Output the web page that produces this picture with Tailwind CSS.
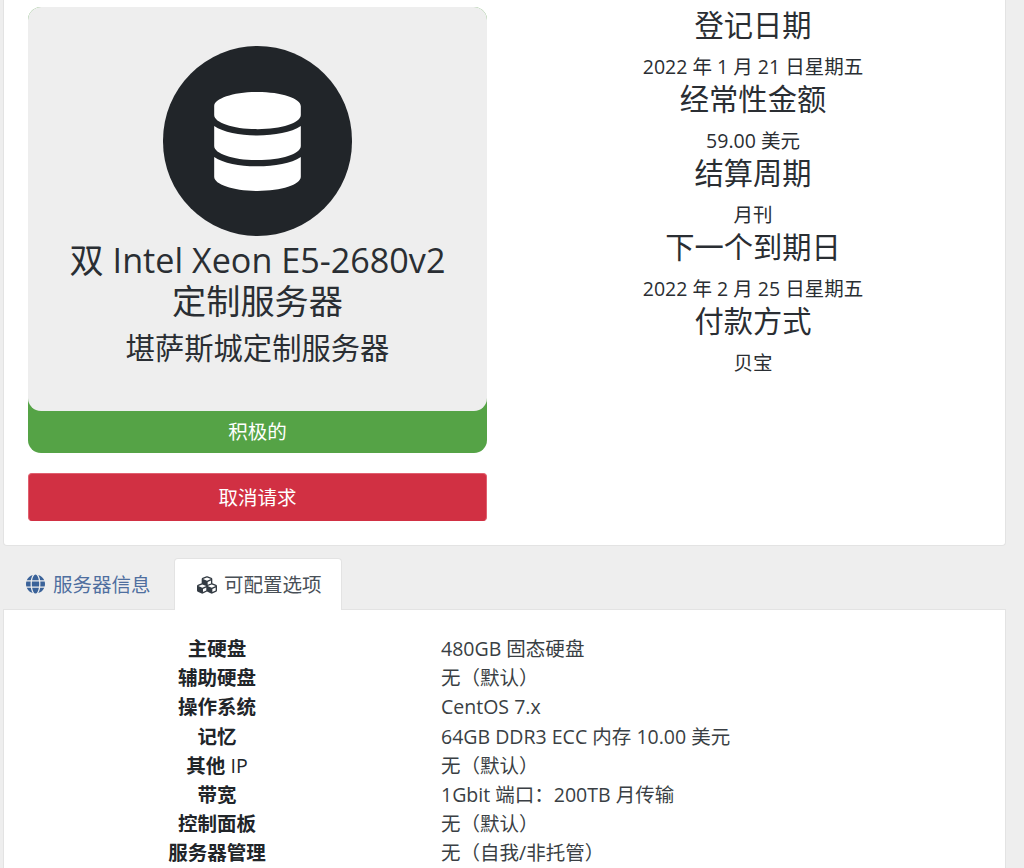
<!DOCTYPE html>
<html lang="zh">
<head>
<meta charset="utf-8">
<script src="https://cdn.jsdelivr.net/npm/@tailwindcss/browser@4"></script>
<title>Server details</title>
</head>
<body class="m-0 bg-[#eeeeee] font-['Open_Sans','Noto_Sans_CJK_SC',sans-serif] text-[19.52px] leading-[29px] text-[#212529]">
<div class="h-[868px] overflow-hidden px-[3px]">
  <section class="w-[1003px] h-[546px] bg-white border border-t-0 border-[#e3e3e3] rounded-b-[4px] flex pt-[7px]">
    <div class="ml-[24px] w-[459px] shrink-0">
      <div class="h-[446px] rounded-[13px] bg-[#55a346] text-white flex flex-col">
        <div class="h-[404px] shrink-0 bg-[#eeeeee] rounded-[13px] text-[#2a2e33] text-center pt-[39px]">
          <div class="mx-auto w-[189px] h-[190px] rounded-full bg-[#212529] flex items-center justify-center">
            <svg class="w-[87px] h-[99px] fill-white" viewBox="0 0 448 512"><path d="M448 73.143v45.714C448 159.143 347.667 192 224 192S0 159.143 0 118.857V73.143C0 32.857 100.333 0 224 0s224 32.857 224 73.143zM448 176v102.857C448 319.143 347.667 352 224 352S0 319.143 0 278.857V176c48.125 33.143 136.208 48.572 224 48.572S399.874 209.143 448 176zm0 160v102.857C448 479.143 347.667 512 224 512S0 479.143 0 438.857V336c48.125 33.143 136.208 48.572 224 48.572S399.874 369.143 448 336z"/></svg>
          </div>
          <h3 class="mt-[3px] text-[34.16px] leading-[41px] font-normal">双 Intel Xeon E5-2680v2<br>定制服务器</h3>
          <h4 class="mt-[10px] text-[29.28px] leading-[35px] font-normal">堪萨斯城定制服务器</h4>
        </div>
        <div class="flex-1 flex items-center justify-center pb-px">积极的</div>
      </div>
      <button class="mt-[20px] block w-full h-[48px] rounded-[4px] bg-[#d13043] border border-[#e0606f] border-b-[#d13043] text-white text-center">取消请求</button>
    </div>
    <div class="ml-[19px] w-[494px] pt-px text-center text-[#2a2e33]">
      <h4 class="text-[29.28px] leading-[35px] mb-[9px]">登记日期</h4>
      <p class="leading-[30px]">2022 年 1 月 21 日星期五</p>
      <h4 class="text-[29.28px] leading-[35px] mb-[9px]">经常性金额</h4>
      <p class="leading-[30px]">59.00 美元</p>
      <h4 class="text-[29.28px] leading-[35px] mb-[9px]">结算周期</h4>
      <p class="leading-[30px]">月刊</p>
      <h4 class="text-[29.28px] leading-[35px] mb-[9px]">下一个到期日</h4>
      <p class="leading-[30px]">2022 年 2 月 25 日星期五</p>
      <h4 class="text-[29.28px] leading-[35px] mb-[9px]">付款方式</h4>
      <p class="leading-[30px]">贝宝</p>
    </div>
  </section>
  <nav class="mt-[12px] h-[52px] flex pl-px">
    <a class="h-[52px] w-[170px] pl-[22px] flex items-center gap-[8px] text-[#4f6f9f]">
      <svg class="w-[19px] h-[20px] fill-[#3a6299]" viewBox="0 0 496 512"><path d="M336.5 160C322 70.7 287.8 8 248 8s-74 62.7-88.5 152h177zM152 256c0 22.2 1.2 43.5 3.3 64h185.3c2.1-20.5 3.3-41.8 3.3-64s-1.2-43.5-3.3-64H155.3c-2.1 20.5-3.3 41.8-3.3 64zm324.7-96c-28.6-67.9-86.5-120.4-158-141.6 24.4 33.8 41.2 84.7 50 141.6h108zM177.2 18.4C105.8 39.6 47.8 92.1 19.3 160h108c8.7-56.9 25.5-107.8 49.9-141.6zM487.4 192H372.7c2.1 21 3.3 42.5 3.3 64s-1.2 43-3.3 64h114.6c5.5-20.5 8.6-41.8 8.6-64s-3.1-43.5-8.5-64zM120 256c0-21.5 1.2-43 3.3-64H8.6C3.2 212.5 0 233.8 0 256s3.2 43.5 8.6 64h114.6c-2-21-3.2-42.5-3.2-64zm39.5 96c14.5 89.3 48.7 152 88.5 152s74-62.7 88.5-152h-177zm159.3 141.6c71.4-21.2 129.4-73.7 158-141.6h-108c-8.8 56.9-25.6 107.8-50 141.6zM19.3 352c28.6 67.9 86.5 120.4 158 141.6-24.4-33.8-41.2-84.7-50-141.6h-108z"/></svg>
      服务器信息
    </a>
    <a class="relative z-10 h-[52px] w-[168px] pl-[22px] flex items-center gap-[7px] bg-white border border-b-0 border-[#e3e3e3] rounded-t-[4px] text-[#495057]">
      <svg class="w-[20px] h-[20px] fill-[#333b43]" viewBox="0 0 512 512"><path d="M488.6 250.2L392 214V105.5c0-15-9.3-28.4-23.4-33.7l-100-37.5c-8.1-3.1-17.1-3.1-25.3 0l-100 37.5c-14.1 5.3-23.4 18.7-23.4 33.7V214l-96.6 36.2C9.3 255.5 0 268.9 0 283.9V394c0 13.6 7.7 26.1 19.9 32.2l100 50c10.1 5.1 22.1 5.1 32.2 0l103.9-52 103.9 52c10.1 5.1 22.1 5.1 32.2 0l100-50c12.2-6.1 19.9-18.6 19.9-32.2V283.9c0-15-9.3-28.4-23.4-33.7zM358 214.8l-85 31.9v-68.2l85-37v73.3zM154 104.1l102-38.2 102 38.2v.6l-102 41.4-102-41.4v-.6zm84 291.1l-85 42.5v-79.1l85-38.8v75.4zm0-112l-102 41.4-102-41.4v-.6l102-38.2 102 38.2v.6zm240 112l-85 42.5v-79.1l85-38.8v75.4zm0-112l-102 41.4-102-41.4v-.6l102-38.2 102 38.2v.6z"/></svg>
      可配置选项
    </a>
  </nav>
  <section class="-mt-px w-[1003px] h-[300px] bg-white border border-[#e3e3e3] pt-[24px] grid grid-cols-[426px_1fr] auto-rows-[29.2px] text-[#3a3f44]">
    <div class="text-center font-bold text-[#212529]">主硬盘</div><div class="pl-[11px]">480GB 固态硬盘</div>
    <div class="text-center font-bold text-[#212529]">辅助硬盘</div><div class="pl-[11px]">无（默认）</div>
    <div class="text-center font-bold text-[#212529]">操作系统</div><div class="pl-[11px]">CentOS 7.x</div>
    <div class="text-center font-bold text-[#212529]">记忆</div><div class="pl-[11px]">64GB DDR3 ECC 内存 10.00 美元</div>
    <div class="text-center font-bold text-[#212529]">其他 <span class="font-normal">IP</span></div><div class="pl-[11px]">无（默认）</div>
    <div class="text-center font-bold text-[#212529]">带宽</div><div class="pl-[11px]">1Gbit 端口：200TB 月传输</div>
    <div class="text-center font-bold text-[#212529]">控制面板</div><div class="pl-[11px]">无（默认）</div>
    <div class="text-center font-bold text-[#212529]">服务器管理</div><div class="pl-[11px]">无（自我/非托管）</div>
  </section>
</div>
</body>
</html>
